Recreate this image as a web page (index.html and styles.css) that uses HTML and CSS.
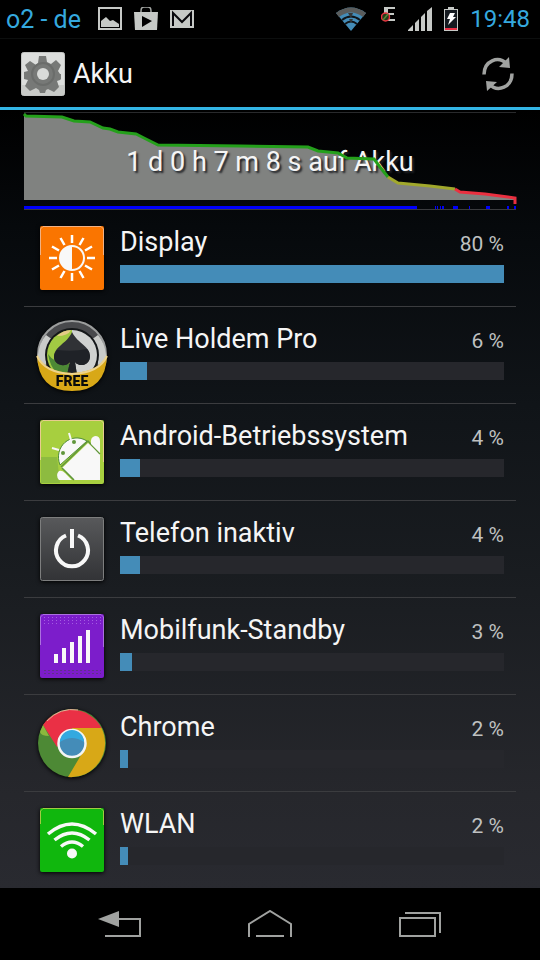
FILE: index.html
```
<!DOCTYPE html>
<html lang="de">
<head>
<meta charset="utf-8">
<meta name="viewport" content="width=device-width, initial-scale=1">
<title>Akku</title>
<link rel="stylesheet" href="styles.css">
</head>
<body>
<div class="screen">
  <div class="status">
    <span class="carrier">o2 - de</span>
    <svg class="note" width="24" height="24" viewBox="0 0 24 24"><path d="M1 1h22v21H1z" fill="none" stroke="#c6c9c6" stroke-width="2"/><path d="M3 20v-6l5-4 4 4 3-1 6 4v3z" fill="#c6c9c6"/></svg>
    <svg class="note" width="24" height="24" viewBox="0 0 24 24"><path d="M7 6V4q0-4 3-4h4q3 0 3 4v2" fill="none" stroke="#a5a8a5" stroke-width="1.5"/><path d="M0 5h24l-1 18H1z" fill="#c6c9c6"/><path d="M8 9v11l10-6z" fill="#000"/></svg>
    <svg class="note" width="24" height="24" viewBox="0 0 24 24"><path d="M0 3h24v18H0z" fill="#c6c9c6"/><path d="M3 19V6l9 9 9-9v13" fill="none" stroke="#08080c" stroke-width="2"/></svg>
    <span class="spacer"></span>
    <svg class="wifi" width="30" height="24" viewBox="0 0 30 24"><path d="M0 6Q15-5 30 6L15 24z" fill="#448cb8"/><path d="M0 6Q15-5 30 6l-3 4Q15 1 3 10z" fill="#5a5c5c"/><path d="M6 13q9-7 18 0M9 17q6-5 12 0" fill="none" stroke="#101418" stroke-width="2"/><path d="M12 6h5l-2 5zM13 12h4l-2 4z" fill="#35383a"/></svg>
    <svg class="edge" width="15" height="24" viewBox="0 0 15 24"><path d="M3 0h11v2H7v4h6v2H7v4h7v2H3z" fill="#c6c9c6"/><circle cx="4.500" cy="10" r="4" fill="#263a1c" stroke="#ea3340" stroke-width="1.500"/><path d="m2 13 5-6" stroke="#528a35" stroke-width="1.500"/></svg>
    <svg class="signal" width="24" height="24" viewBox="0 0 24 24"><path d="M0 24v-1l5-5v6zM7 16l4-4v12H7zM13 10l4-4v18h-4zM19 4l5-4v24h-5z" fill="#c6c9c6"/></svg>
    <svg class="battery" width="14" height="24" viewBox="0 0 14 24"><path d="M4 0h6v2h4v22H0V2h4z" fill="#c6c9c6"/><path d="M1 3h12v18H1z" fill="#151a20"/><path d="M1 21h12v2H1z" fill="#ea3045"/><path d="M6 6h5l-2 4h3l-8 8 2-6H3z" fill="#fff"/></svg>
    <time class="clock">19:48</time>
  </div>
  <header class="titlebar">
    <svg width="44" height="44" viewBox="0 0 44 44"><rect x=".5" y=".5" width="43" height="43" rx="2" fill="#dcdedc" stroke="#c2c4c2"/><path d="M1 33h42v10H1z" fill="#c9cbc8"/><path d="m18 4h7l1 6 4 2 5-4 5 5-3 6 2 3h1v5l-1 1-3 1 2 6-5 5-6-3-2 1-1 3h-5l-1-3-3-2-6 3-5-5 3-6-4-1v-7l4-1-3-6 5-4 6 4 2-2z" fill="#777977"/><circle cx="22" cy="22" r="11" fill="none" stroke="#6b6d6b" stroke-width="2"/><circle cx="22" cy="22" r="6" fill="#d9dbd9"/></svg>
    <h1>Akku</h1>
    <button class="refresh" aria-label="Aktualisieren"><svg width="34" height="36" viewBox="0 0 34 36"><path d="M3 18.500C3 5 17-1 26 8M31 17.500c0 13.500-14 19.500-23 10.500" fill="none" stroke="#a0a2a0" stroke-width="3.500"/><path d="M28 1l1 11-11-1zM6 35 5 25l11 1z" fill="#a0a2a0"/></svg></button>
  </header>
  <main>
    <section class="chart">
      <svg viewBox="0 0 492 96" preserveAspectRatio="none"><path d="M0 87V0L2 3 38 4 50 8 66 9 79 15 86 16 94 19 112 21 120 25 134 32 216 33 284 34 294 38 314 40 323 45 350 46 356 54 364 64 374 70 406 73 431 76 436 79 461 81 491 85 492 87z" fill="#808280"/><path d="M0 93h393v3H0zM411 93h1v3h-1zM413 93h1v3h-1zM416 93h1v3h-1zM418 93h2v3h-2zM429 93h5v3h-5zM445 93h1v3h-1zM462 93h4v3h-4zM483 93h2v3h-2zM490 93h2v3h-2z" fill="#0000fa"/></svg>
      <p>1 d 0 h 7 m 8 s auf Akku</p>
      <svg viewBox="0 0 492 96" preserveAspectRatio="none" fill="none" stroke-width="3"><path d="M0 1 2 3 38 4 50 8 66 9 79 15 86 16 94 19 112 21 120 25 134 32 216 33 284 34 294 38 314 40 323 45 350 46 356 54 364 64" stroke="#24a01b"/><path d="M364 64 374 70 406 73 431 76" stroke="#a1a82c"/><path d="M431 76 436 79 461 81 491 85V91" stroke="#ea3040"/></svg>
    </section>
    <ul class="usage">
      <li>
        <svg class="icon" viewBox="0 0 64 64"><rect width="64" height="64" rx="2" fill="#fa7500"/><path d="M.5 29V3L3 .5h58L63.500 3v26" fill="none" stroke="#f0b184"/><circle cx="32" cy="32" r="12" fill="none" stroke="#f8f8f8" stroke-width="2"/><path d="M32 20a12 12 0 0 0 0 24z" fill="#f8f8f8"/><path d="M32 9v8M32 47v8M9 32h8M47 32h8M20.500 12l4 7M39.500 45l4 7M12 20.500l7 4M45 39.500l7 4M12 43.500l7-4M45 24.500l7-4M20.500 52l4-7M39.500 19l4-7" stroke="#fff" stroke-width="2.500"/></svg>
        <div class="info"><span class="name" id="n1">Display</span><span class="pct">80 %</span><meter aria-labelledby="n1" max="80" value="80"></meter></div>
      </li>
      <li>
        <svg class="icon" viewBox="0 0 64 64"><circle cx="32" cy="32" r="34" fill="#48494c" stroke="#9b9d9d" stroke-width="2"/><path d="M-2 32Q-1 20 6 12l7 5Q5 26 6 42l-8-3zM66 32Q65 20 58 12l-7 5q8 9 7 25l8-3z" fill="#c9cbc9"/><circle cx="32" cy="32" r="27" fill="#141719"/><path d="M32 7a25 25 0 0 0 0 50z" fill="#a2ca43"/><path d="M32 7a25 25 0 0 1 0 50z" fill="#d0d2d0"/><path d="M8 31q7 11 24 10v14Q12 55 8 31z" fill="#4d8935"/><path d="M17 13q6-6 14-6-3 6-14 6z" fill="#e5ca87"/><path d="M32 9c6 12 18 14 18 24 0 9-10 12-15 6l2 13H27l3-13c-5 6-16 3-16-5 0-11 13-13 18-25z" fill="#303236"/><path d="M14 34c0-2 1-5 3-7q17 2 30-1 3 3 3 7c0 9-10 12-15 6l2 13H27l3-13c-5 6-16 3-16-5z" fill="#1f2227"/><path d="M-3 32q8 17 35 18 27-1 35-18Q66 68 32 68-2 68-3 32z" fill="#d8a817"/><path d="M-3 33q8 17 35 18 27-1 35-18" fill="none" stroke="#eed38b" stroke-width="2"/><text x="32" y="63" class="free">FREE</text></svg>
        <div class="info"><span class="name" id="n2">Live Holdem Pro</span><span class="pct">6 %</span><meter aria-labelledby="n2" max="85" value="6"></meter></div>
      </li>
      <li>
        <svg class="icon" viewBox="0 0 64 64"><rect width="64" height="64" rx="2" fill="#a7cf3f"/><path d="M.5 40V3L3 .5h58L63.500 3v39" fill="none" stroke="#e8cb90"/><path d="M1 37h16l3 26H1z" fill="#8dbb40"/><path d="M20 45C13 27 31 11 47 21z" fill="#f8f8f8" stroke="#519038"/><path d="M48 23 22 48l12 12h26V34z" fill="#f8f8f8"/><path d="m21 47 27-26 12 13M22 48l12 12" fill="none" stroke="#60963c" stroke-width="1.500"/><path d="m31 20-2-7M19 30l-7-2" stroke="#f8f8f8" stroke-width="2"/><path d="M60 33 51 24q-1-7 4-8 5 0 5 5zM32 60H19q-4-5 0-9 3-1 6 2z" fill="#f8f8f8"/><circle cx="34" cy="22" r="2" fill="#60963c"/><circle cx="23" cy="33" r="2" fill="#60963c"/></svg>
        <div class="info"><span class="name" id="n3">Android-Betriebssystem</span><span class="pct">4 %</span><meter aria-labelledby="n3" max="77" value="4"></meter></div>
      </li>
      <li>
        <svg class="icon" viewBox="0 0 64 64"><linearGradient id="steel" x2="0" y2="1"><stop stop-color="#58595b"/><stop offset="1" stop-color="#323336"/></linearGradient><rect x=".5" y=".5" width="63" height="63" rx="2" fill="url(#steel)" stroke="#7d7e7e"/><path d="M26 18.500a16 16 0 1 0 12 0" fill="none" stroke="#f8f8f8" stroke-width="4"/><path d="M32 12v19" stroke="#f8f8f8" stroke-width="4"/></svg>
        <div class="info"><span class="name" id="n4">Telefon inaktiv</span><span class="pct">4 %</span><meter aria-labelledby="n4" max="77" value="4"></meter></div>
      </li>
      <li>
        <svg class="icon" viewBox="0 0 64 64"><rect width="64" height="64" rx="2" fill="#7c1dcb"/><path d="M.5 31V3L3 .5h58L63.500 3v30" fill="none" stroke="#ab70df"/><path d="M4 3.500h57M4 6.500h57M4 9.500h57" stroke="#a45ce2" stroke-dasharray="1 3"/><path d="M4 56.500h57M4 59.500h57" stroke="#5f3188" stroke-dasharray="2 2"/><path d="M14 40h4v9h-4zM22 34h4v15h-4zM30 28h4v21h-4zM38 22h4v27h-4zM46 16h4v33h-4z" fill="#f8f8f8"/></svg>
        <div class="info"><span class="name" id="n5">Mobilfunk-Standby</span><span class="pct">3 %</span><meter aria-labelledby="n5" max="96" value="3"></meter></div>
      </li>
      <li>
        <svg class="icon" viewBox="0 0 64 64"><circle cx="32" cy="32" r="34" fill="#4d8935"/><path d="M32 17h29.500A34 34 0 0 1 28 66l16-27z" fill="#d8a817"/><path d="M3 14a34 34 0 0 1 58.500 3H32L17 36z" fill="#ea3045"/><path d="M3 14 0 21q1 4 9 4z" fill="#8bb83d"/><path d="M7 10Q20-4 38-1" fill="none" stroke="#e5b39a"/><circle cx="32" cy="32.500" r="13.500" fill="#448cb8" stroke="#f4f5f4" stroke-width="2.500"/><path d="M20 31a12 12 0 0 1 24 0q-12-8-24 0z" fill="#34a9df"/></svg>
        <div class="info"><span class="name" id="n6">Chrome</span><span class="pct">2 %</span><meter aria-labelledby="n6" max="96" value="2"></meter></div>
      </li>
      <li>
        <svg class="icon" viewBox="0 0 64 64"><rect width="64" height="64" rx="2" fill="#10b70d"/><path d="M.5 16V3L3 .5h58L63.500 3v14" fill="none" stroke="#a2ca43"/><path d="M8 26q24-20 48 0M14.500 32q17.500-14 35 0M21 38.500q11-9 22 0" fill="none" stroke="#f8f8f8" stroke-width="3.500"/><circle cx="32" cy="45.500" r="5" fill="#f8f8f8"/></svg>
        <div class="info"><span class="name" id="n7">WLAN</span><span class="pct">2 %</span><meter aria-labelledby="n7" max="96" value="2"></meter></div>
      </li>
    </ul>
  </main>
  <nav class="keys">
    <button aria-label="Zurück"><svg width="44" height="28" viewBox="0 0 44 28"><path d="M0 9 21 1v16z" fill="#a0a2a0"/><path d="M20 9h22v17H7" fill="none" stroke="#a0a2a0" stroke-width="2"/></svg></button>
    <button aria-label="Startseite"><svg width="44" height="28" viewBox="0 0 44 28"><path d="M1 27V14L22 1l21 13v13M8 26h28" fill="none" stroke="#a0a2a0" stroke-width="2"/></svg></button>
    <button aria-label="Letzte Apps"><svg width="44" height="28" viewBox="0 0 44 28"><path d="M2 8h35v18H2zM7 3h35v20" fill="none" stroke="#a0a2a0" stroke-width="2"/></svg></button>
  </nav>
</div>
</body>
</html>
```
FILE: styles.css
```
* {
  box-sizing: border-box;
}

body {
  margin: 0;
  background: #000;
  color: #f5f5f5;
  font-family: Roboto, "Noto Sans", sans-serif;
}

.screen {
  display: flex;
  flex-direction: column;
  min-height: 100vh;
}

svg {
  display: block;
  flex: none;
}

button {
  display: grid;
  place-items: center;
  padding: 0;
  border: 0;
  background: none;
}

.status {
  display: flex;
  align-items: center;
  height: 38px;
  padding: 0 10px 0 6px;
  color: #35a9df;
  font-size: 24px;
}

.carrier {
  margin-right: 5px;
  font-size: 25px;
}

.note {
  margin-left: 12px;
}

.spacer {
  flex: 1;
}

.edge {
  margin: 0 12px 0 15px;
}

.battery {
  margin: 0 12px;
}

.titlebar {
  display: flex;
  align-items: center;
  height: 72px;
  padding: 2px 25px 0 21px;
  border-top: 1px solid #0c0e0e;
  border-bottom: 3px solid #33b5e5;
}

h1 {
  flex: 1;
  margin: 0 8px;
  font-size: 27px;
  font-weight: 400;
}

main {
  flex: 1;
  padding: 2px 24px 0;
  background: linear-gradient(#000 0%, #06090c 15%, #101418 38%, #1a1d21 62%, #26272c 88%, #292a30 100%);
}

.chart {
  display: grid;
  height: 98px;
  border-top: 1px solid #292a2c;
  border-bottom: 1px solid #3b3c3f;
}

.chart > * {
  grid-area: 1 / 1;
}

.chart svg {
  width: 100%;
  height: 96px;
  overflow: visible;
}

.chart p {
  z-index: 0;
  margin: 0;
  font-size: 27px;
  line-height: 98px;
  text-align: center;
  text-shadow: 2px 2px 2px #202226;
}

.chart svg:last-child {
  z-index: 1;
}

.usage {
  margin: 0;
  padding: 0;
  list-style: none;
}

.usage li {
  display: flex;
  gap: 16px;
  padding: 16px 12px 16px 16px;
  border-bottom: 1px solid #3b3c3f;
}

.usage li:last-child {
  border-bottom: 0;
}

.icon {
  width: 64px;
  height: 64px;
  overflow: visible;
  filter: drop-shadow(0 1px 2px #000);
}

.free {
  fill: #080a0c;
  font-size: 14px;
  font-weight: 900;
  text-anchor: middle;
}

.info {
  display: grid;
  flex: 1;
  grid-template-columns: 1fr auto;
  grid-template-rows: 32px 18px;
  row-gap: 7px;
}

.name {
  font-size: 27px;
  line-height: 32px;
}

.pct {
  color: #bfc1c1;
  font-size: 21px;
  line-height: 36px;
}

meter {
  display: block;
  grid-column: 1 / -1;
  width: 100%;
  height: 18px;
  appearance: none;
  background: #26272c;
}

meter::-webkit-meter-inner-element {
  display: block;
  position: static;
  height: 18px;
  margin: 0;
}

meter::-webkit-meter-bar {
  display: block;
  position: static;
  height: 18px;
  margin: 0;
  border: 0;
  border-radius: 0;
  background: #26272c;
  transform: none;
  translate: none;
}

meter::-webkit-meter-optimum-value {
  margin: 0;
  background: #448cb8;
  transform: none;
  translate: none;
}

.keys {
  display: grid;
  grid-template-columns: repeat(3, 1fr);
  height: 72px;
  padding: 0 45px;
  background: #000;
}
```
